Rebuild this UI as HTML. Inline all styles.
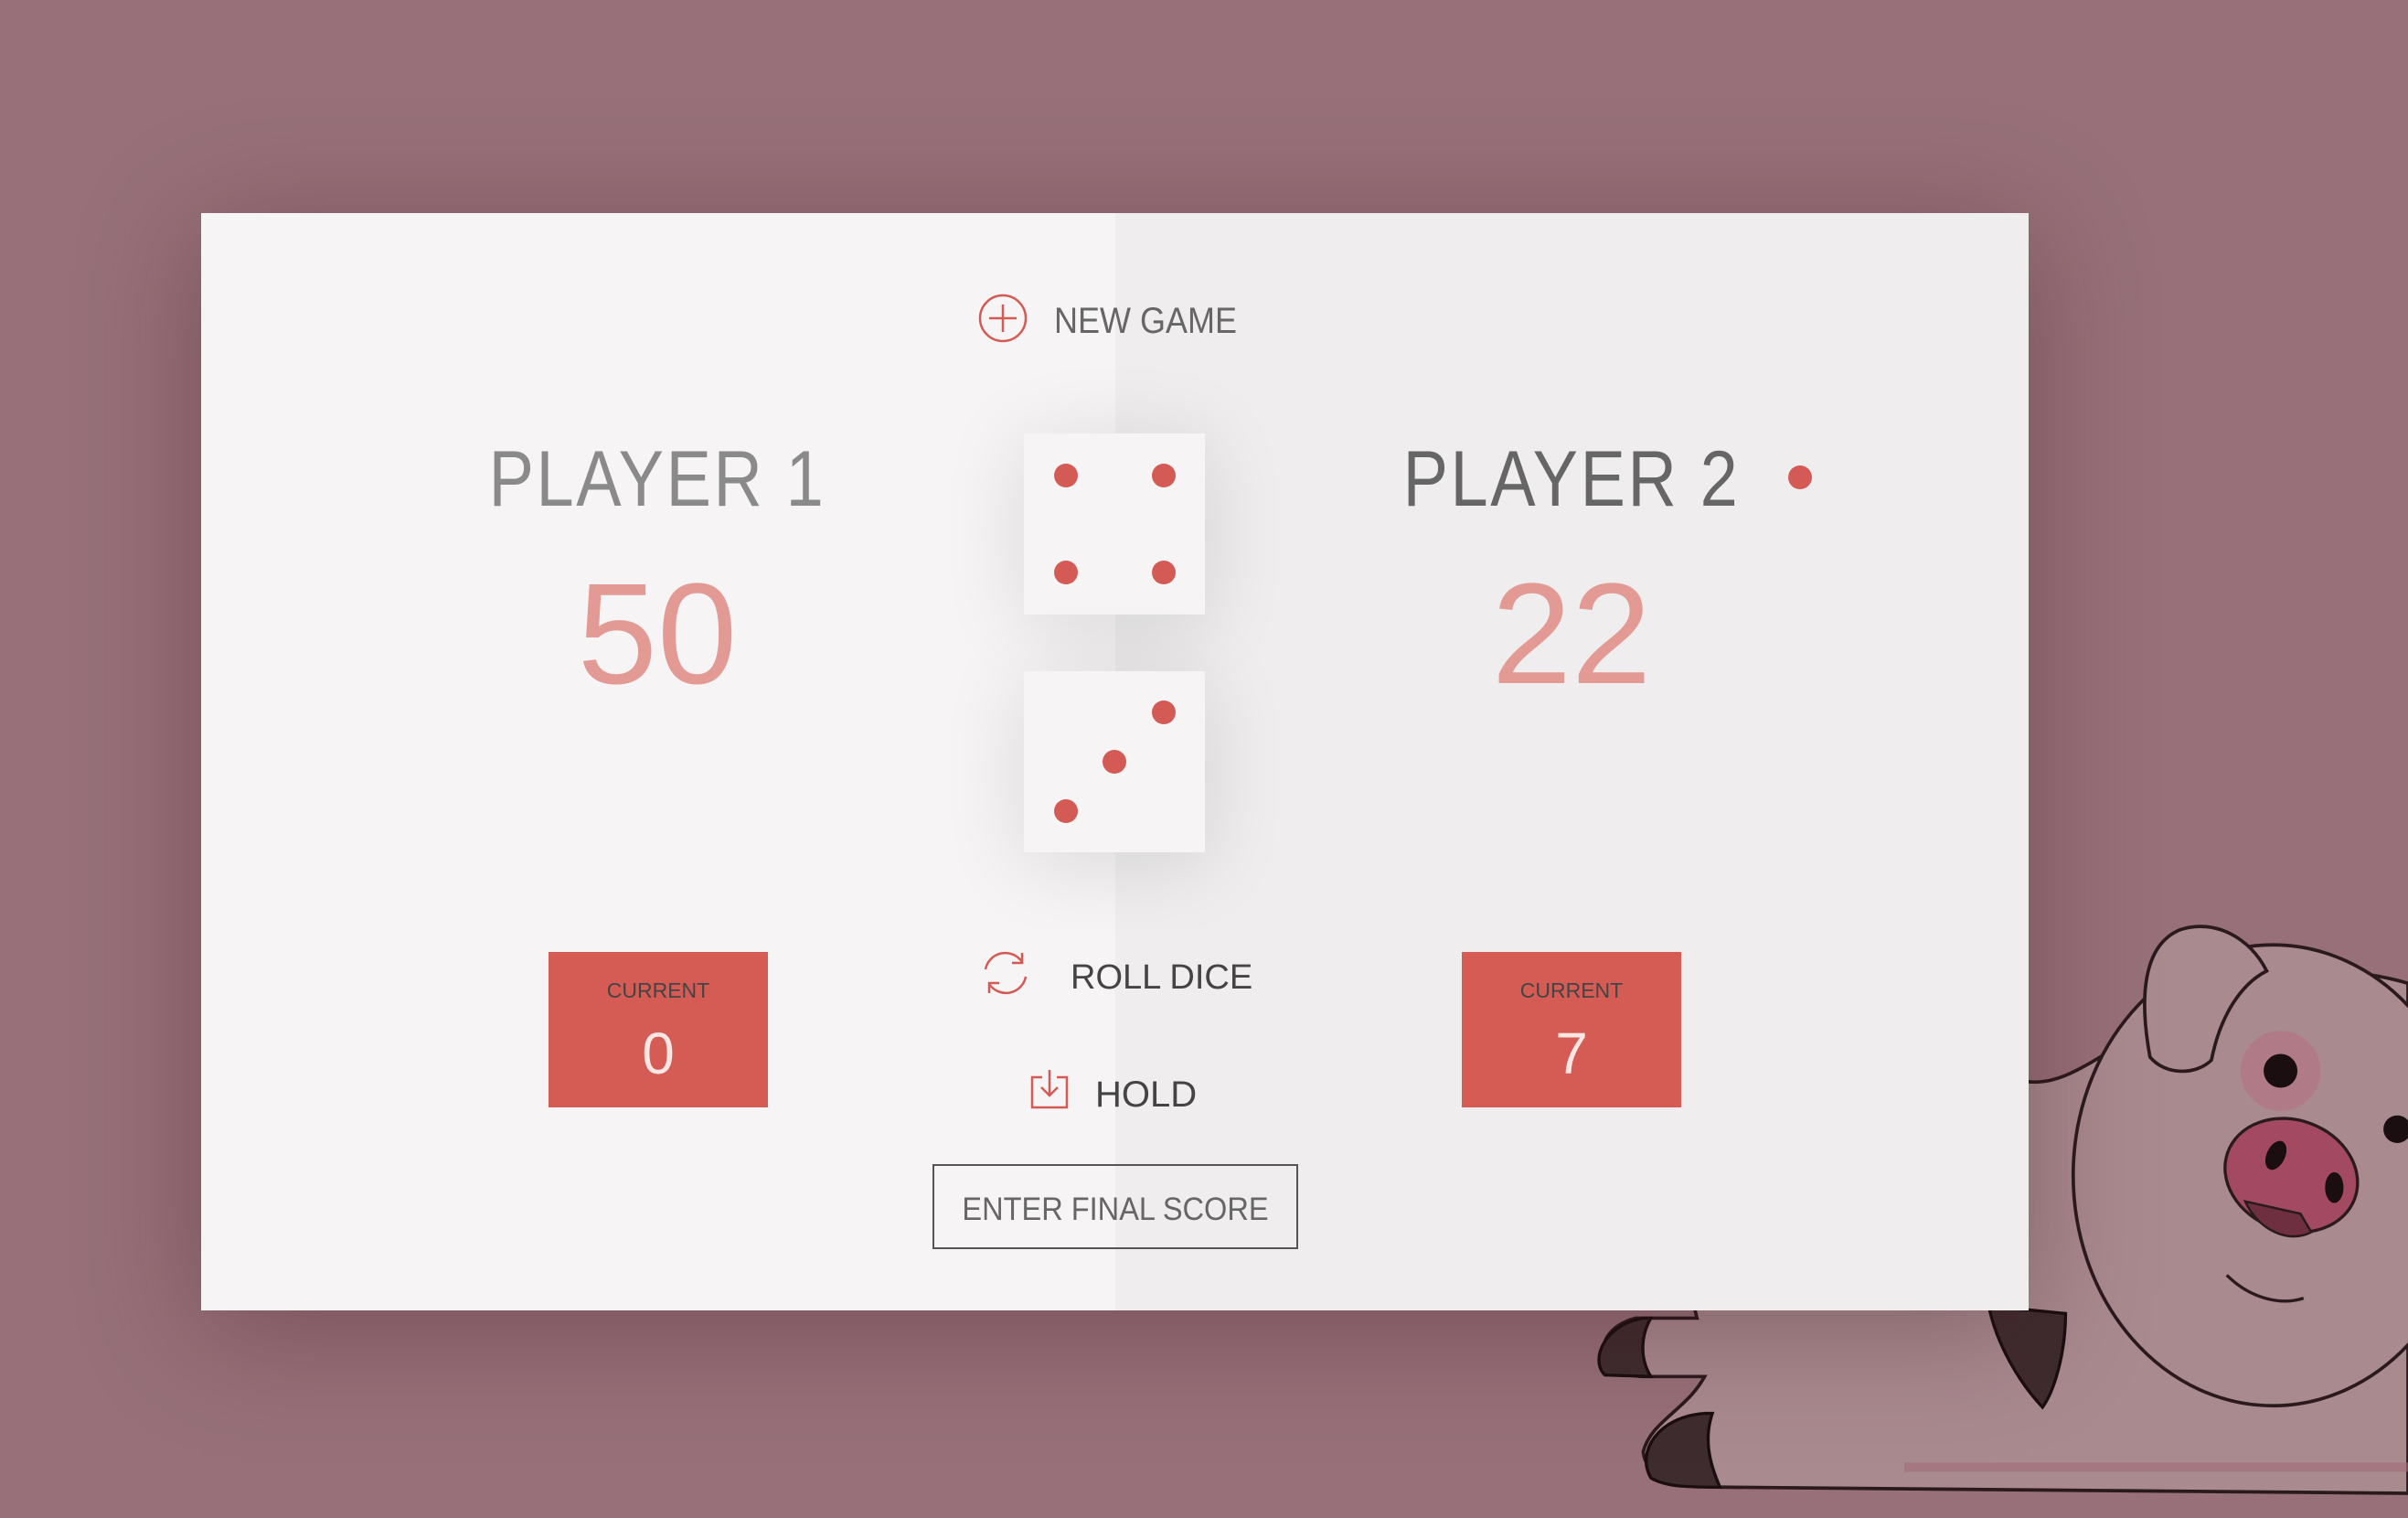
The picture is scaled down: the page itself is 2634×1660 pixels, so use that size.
<!DOCTYPE html>
<html><head><meta charset="utf-8"><style>
*{margin:0;padding:0;box-sizing:border-box}
body{width:2634px;height:1660px;overflow:hidden;background:#977079;font-family:"Liberation Sans",sans-serif;position:relative}
.abs{position:absolute;line-height:1;white-space:nowrap}
#panel{position:absolute;left:220px;top:233px;width:1999px;height:1200px;box-shadow:0 20px 120px rgba(60,20,30,.35);overflow:hidden}
.half{position:absolute;top:0;height:100%}
.c{text-align:center;transform-origin:center}
.die{position:absolute;width:198px;height:198px;background:#f6f4f4;box-shadow:0 10px 90px rgba(0,0,0,.13)}
.dot{position:absolute;width:26px;height:26px;border-radius:50%;background:#d45b55}
.cur{position:absolute;width:240px;height:170px;background:#d55b55}
</style></head><body>
<svg style="position:absolute;left:0;top:0" width="2634" height="1660" viewBox="0 0 1568 988">
<g stroke="#2a1a1e" stroke-width="2.2" fill="#a98a8f">
<path d="M1120,968 L1568,972 L1568,640 C1500,620 1420,640 1380,680 C1350,700 1335,706 1320,704 L1150,704 C1100,720 1090,800 1105,858 L1065,858 C1035,866 1038,896 1072,896 L1110,896 C1098,918 1075,925 1070,945 C1072,965 1100,968 1120,968 Z"/>
<ellipse cx="1480" cy="765" rx="130" ry="150"/>
<path d="M1400,688 C1393,650 1395,615 1420,605 C1442,598 1465,610 1476,632 C1460,640 1446,660 1440,690 C1430,700 1410,700 1400,688 Z"/>
</g>
<circle cx="1485" cy="697" r="26" fill="#b07a86"/>
<circle cx="1485" cy="697" r="11" fill="#1a0e10"/>
<circle cx="1561" cy="735" r="9" fill="#1a0e10"/>
<g transform="rotate(20 1492 765)"><ellipse cx="1492" cy="765" rx="44" ry="36" fill="#a34a62" stroke="#2a1a1e" stroke-width="2"/></g>
<ellipse cx="1482" cy="752" rx="6" ry="10" fill="#1a0e10" transform="rotate(25 1482 752)"/>
<ellipse cx="1520" cy="773" rx="6" ry="10" fill="#1a0e10"/>
<path d="M1462,782 C1470,800 1490,810 1505,802 L1498,790 Z" fill="#6e3040" stroke="#2a1a1e" stroke-width="1.5"/>
<path d="M1450,830 C1465,845 1485,850 1500,845" stroke="#2a1a1e" stroke-width="2" fill="none"/>
<g fill="#3f2c2e" stroke="#1a0e10" stroke-width="2">
<path d="M1070,858 C1045,862 1035,885 1045,895 L1075,896 C1068,885 1068,870 1075,858 Z"/>
<path d="M1110,920 C1080,922 1065,945 1075,962 C1085,968 1100,968 1120,968 C1112,950 1110,935 1115,920 Z"/>
<path d="M1295,850 L1345,855 C1345,880 1338,905 1330,916 C1315,900 1300,875 1295,850 Z"/>
</g>
<path d="M1240,955 L1568,955" stroke="#a26b78" stroke-width="6" opacity=".6"/>
</svg>

<div id="panel">
<div class="half" style="left:0;width:1000px;background:#f6f4f4"></div>
<div class="half" style="left:1000px;width:999px;background:#efeded"></div>
</div>

<svg class="abs" style="left:1070px;top:321px" width="54" height="54" viewBox="0 0 54 54"><circle cx="27" cy="27" r="25" fill="none" stroke="#d45b55" stroke-width="2.5"/><path d="M12 27H42M27 12V42" stroke="#d45b55" stroke-width="2.5"/></svg>
<div class="abs" style="left:1153px;top:331px;font-size:40px;color:#666;transform:scaleX(.9);transform-origin:left">NEW GAME</div>

<div class="abs c" style="left:419px;width:600px;top:481px;font-size:86px;color:#8a8a8a;transform:scaleX(.86);letter-spacing:3px">PLAYER 1</div>
<div class="abs c" style="left:1419px;width:600px;top:481px;font-size:86px;color:#666;transform:scaleX(.86);letter-spacing:3px">PLAYER 2</div>
<div class="abs" style="left:1956px;top:509px;width:26px;height:26px;border-radius:50%;background:#d45b55"></div>
<div class="abs c" style="left:519px;width:400px;top:615px;font-size:157px;color:#e39a95">50</div>
<div class="abs c" style="left:1519px;width:400px;top:615px;font-size:157px;color:#e39a95">22</div>

<div class="die" style="left:1120px;top:474px">
<div class="dot" style="left:33px;top:33px"></div><div class="dot" style="left:140px;top:33px"></div>
<div class="dot" style="left:33px;top:139px"></div><div class="dot" style="left:140px;top:139px"></div>
</div>
<div class="die" style="left:1120px;top:734px">
<div class="dot" style="left:140px;top:32px"></div><div class="dot" style="left:86px;top:86px"></div><div class="dot" style="left:33px;top:140px"></div>
</div>

<div class="cur" style="left:600px;top:1041px"></div>
<div class="cur" style="left:1599px;top:1041px"></div>
<div class="abs c" style="left:600px;width:240px;top:1072px;font-size:23px;color:#444">CURRENT</div>
<div class="abs c" style="left:1599px;width:240px;top:1072px;font-size:23px;color:#444">CURRENT</div>
<div class="abs c" style="left:600px;width:240px;top:1120px;font-size:64px;color:#fbe6e4">0</div>
<div class="abs c" style="left:1599px;width:240px;top:1120px;font-size:64px;color:#fbe6e4">7</div>

<svg class="abs" style="left:1070px;top:1034px" width="60" height="60" viewBox="0 0 60 60" fill="none" stroke="#d45b55" stroke-width="2.5"><path d="M8 26 A22 22 0 0 1 48 18"/><path d="M48 8 L48 19 L37 19"/><path d="M52 34 A22 22 0 0 1 12 42"/><path d="M12 52 L12 41 L23 41"/></svg>
<div class="abs" style="left:1171px;top:1050px;font-size:38px;color:#444">ROLL DICE</div>

<svg class="abs" style="left:1126px;top:1168px" width="44" height="46" viewBox="0 0 44 46" fill="none" stroke="#d45b55" stroke-width="2.5"><path d="M14 10H3V43H41V10H30"/><path d="M22 2V30M13 21L22 30L31 21"/></svg>
<div class="abs" style="left:1198px;top:1177px;font-size:40px;color:#444">HOLD</div>

<div class="abs" style="left:1020px;top:1273px;width:400px;height:93px;border:2px solid #555"></div>
<div class="abs c" style="left:1020px;width:400px;top:1305px;font-size:35px;color:#666;transform:scaleX(.93)">ENTER FINAL SCORE</div>
</body></html>
